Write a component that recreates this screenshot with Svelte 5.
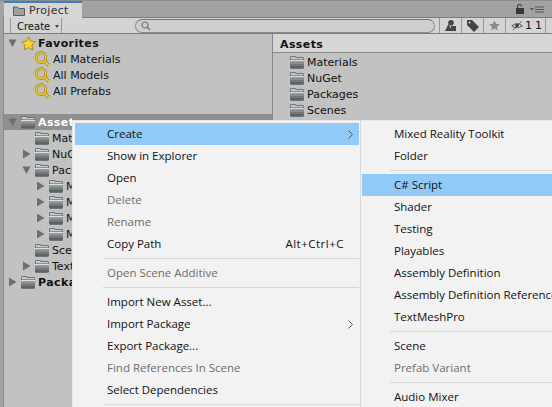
<script>
  const favorites = ['All Materials', 'All Models', 'All Prefabs'];
  const assets = ['Materials', 'NuGet', 'Packages', 'Scenes', 'TextMeshPro'];

  const tree = [
    { name: 'Materials', depth: 1 },
    { name: 'NuGet', depth: 1, arrow: 'closed' },
    { name: 'Packages', depth: 1, arrow: 'open' },
    { name: 'MixedReality', depth: 2, arrow: 'closed' },
    { name: 'Microsoft', depth: 2, arrow: 'closed' },
    { name: 'Models', depth: 2, arrow: 'closed' },
    { name: 'Meshes', depth: 2, arrow: 'closed' },
    { name: 'Scenes', depth: 1 },
    { name: 'TextMeshPro', depth: 1, arrow: 'closed' }
  ];

  const mainMenu = [
    { label: 'Create', active: true, sub: true },
    { label: 'Show in Explorer' },
    { label: 'Open' },
    { label: 'Delete', off: true },
    { label: 'Rename', off: true },
    { label: 'Copy Path', key: 'Alt+Ctrl+C' },
    { sep: true },
    { label: 'Open Scene Additive', off: true },
    { sep: true },
    { label: 'Import New Asset...' },
    { label: 'Import Package', sub: true },
    { label: 'Export Package...' },
    { label: 'Find References In Scene', off: true },
    { label: 'Select Dependencies' },
    { sep: true }
  ];

  const createMenu = [
    { label: 'Mixed Reality Toolkit' },
    { label: 'Folder' },
    { sep: true },
    { label: 'C# Script', active: true },
    { label: 'Shader' },
    { label: 'Testing' },
    { label: 'Playables' },
    { label: 'Assembly Definition' },
    { label: 'Assembly Definition Reference' },
    { label: 'TextMeshPro' },
    { sep: true },
    { label: 'Scene' },
    { label: 'Prefab Variant', off: true },
    { sep: true },
    { label: 'Audio Mixer' }
  ];
</script>

{#snippet folder()}
  <svg class="folder" width="16" height="14" viewBox="0 0 16 14">
    <path d="M1 13 V2 L2 1 H6.5 L7.5 2 H14 L15 3 V13 L14 14 H2 Z" fill="#6e7679" />
    <path d="M2 2 H6 L7 3 H14 V4 H2 Z" fill="#c9c9c9" />
    <rect x="2" y="4" width="12" height="1" fill="#8d8f90" />
    <rect x="1" y="5" width="14" height="1" fill="#dcdcdc" />
    <rect x="1" y="6" width="14" height="1" fill="#9a9fa1" />
    <rect x="1" y="7" width="14" height="2" fill="#878e91" />
    <rect x="1" y="9" width="14" height="2" fill="#70787b" />
    <rect x="1" y="11" width="14" height="2" fill="#5d6468" />
  </svg>
{/snippet}

{#snippet arrow(kind)}
  <svg class="arrow" width="10" height="10" viewBox="0 0 10 10">
    {#if kind === 'open'}
      <path d="M0.5 1.5 H8.5 L4.5 9 Z" fill="#6e6e6e" />
    {:else if kind === 'closed'}
      <path d="M1 0.5 L8.5 5 L1 9.5 Z" fill="#6e6e6e" />
    {/if}
  </svg>
{/snippet}

{#snippet search()}
  <svg class="search" width="17" height="16" viewBox="0 0 17 16">
    <circle cx="7" cy="6.5" r="4.8" fill="none" stroke="#8a7a30" stroke-width="2.8" />
    <circle cx="7" cy="6.5" r="4.8" fill="none" stroke="#f5cf1f" stroke-width="1.6" />
    <path d="M10.5 10 L15 14.5" stroke="#8a7a30" stroke-width="3.2" />
    <path d="M10.5 10 L15 14.5" stroke="#f5cf1f" stroke-width="1.8" />
  </svg>
{/snippet}

{#snippet menu(items)}
  {#each items as item}
    {#if item.sep}
      <div class="sep"></div>
    {:else}
      <div class="item" class:active={item.active} class:off={item.off}>
        <span class="label">{item.label}</span>
        {#if item.key}<span class="key">{item.key}</span>{/if}
        {#if item.sub}
          <svg class="chev" width="5" height="9" viewBox="0 0 5 9"><path d="M0.5 0.5 L4.5 4.5 L0.5 8.5" fill="none" stroke="#555" /></svg>
        {/if}
      </div>
    {/if}
  {/each}
{/snippet}

<div class="window">
  <div class="tabs">
    <div class="tab">
      <svg width="12" height="10" viewBox="0 0 12 10"><path d="M0.5 9.5 V1 H4.5 L6 2.5 H11.5 V9.5 Z" fill="#a0a0a0" stroke="#5c5c5c" /></svg>
      <span>Project</span>
    </div>
    <div class="tab-tools">
      <svg width="9" height="10" viewBox="0 0 9 10"><path d="M1.5 4.5 V2.5 A2 2 0 0 1 5.5 2.5" fill="none" stroke="#3c3c3c" stroke-width="1.2" /><rect x="0" y="4" width="8" height="6" fill="#383838" /></svg>
      <svg width="14" height="7" viewBox="0 0 14 7"><path d="M0 2 H4 L2 4.5 Z" fill="#555" /><path d="M5 1 H14 M5 3.5 H14 M5 6 H14" stroke="#555" stroke-width="1.2" /></svg>
    </div>
  </div>

  <div class="toolbar">
    <div class="create">Create <i></i></div>
    <div class="search-box">
      <svg width="12" height="12" viewBox="0 0 12 12"><circle cx="5" cy="5" r="3" fill="none" stroke="#777" stroke-width="1.2" /><path d="M7 7 L10 10" stroke="#777" stroke-width="1.4" /></svg>
    </div>
    <div class="tool">
      <svg width="11" height="11" viewBox="0 0 11 11"><path d="M3.5 4 L7 11 H0 Z" fill="#444" /><circle cx="6" cy="2.8" r="2.8" fill="#444" /><rect x="6" y="6" width="5" height="5" fill="#444" /></svg>
    </div>
    <div class="tool">
      <svg width="12" height="12" viewBox="0 0 12 12"><path d="M0 0 H5 L12 7 L7 12 L0 5 Z" fill="#444" /><circle cx="2.5" cy="2.5" r="1" fill="#d2d2d2" /></svg>
    </div>
    <div class="tool">
      <svg width="11" height="11" viewBox="0 0 13 12"><path d="M6.5 0 L8.3 4 L13 4.5 L9.4 7.4 L10.5 12 L6.5 9.6 L2.5 12 L3.6 7.4 L0 4.5 L4.7 4 Z" fill="#8a8a8a" /></svg>
    </div>
    <div class="tool eye">
      <svg width="16" height="13" viewBox="0 0 16 13"><path d="M1 7 Q8 1 15 7 Q8 12 1 7 Z" fill="none" stroke="#444" stroke-width="1.1" /><circle cx="8" cy="6.5" r="2.4" fill="#444" /><path d="M2.5 12.5 L14 1" stroke="#444" stroke-width="1.2" /></svg>
      <span>11</span>
    </div>
  </div>

  <div class="panes">
    <div class="left">
      <div class="row head fav">
        {@render arrow('open')}
        <svg class="star" width="15" height="15" viewBox="0 0 15 15"><path d="M7.5 0.8 L9.6 5.2 L14.4 5.8 L10.9 9.1 L11.8 14 L7.5 11.6 L3.2 14 L4.1 9.1 L0.6 5.8 L5.4 5.2 Z" fill="#fbd335" stroke="#a98a1a" stroke-linejoin="round" /></svg>
        <b>Favorites</b>
      </div>
      {#each favorites as fav}
        <div class="row fav-item">{@render search()}<span>{fav}</span></div>
      {/each}

      <div class="gap"></div>

      <div class="row head selected">
        {@render arrow('open')}
        {@render folder()}
        <b>Assets</b>
      </div>
      {#each tree as node}
        <div class="row" class:d2={node.depth === 2} class:d1={node.depth === 1}>
          {@render arrow(node.arrow)}
          {@render folder()}
          <span>{node.name}</span>
        </div>
      {/each}
      <div class="row head">
        {@render arrow('closed')}
        {@render folder()}
        <b>Packages</b>
      </div>
    </div>

    <div class="right">
      <div class="crumb">Assets</div>
      <div class="list">
        {#each assets as name}
          <div class="row file">{@render folder()}<span>{name}</span></div>
        {/each}
      </div>
    </div>
  </div>

  <div class="menu main-menu">
    {@render menu(mainMenu)}
  </div>
  <div class="menu sub-menu">
    {@render menu(createMenu)}
  </div>
</div>

<style>
  :global(body) {
    margin: 0;
    overflow: hidden;
  }
  .window {
    position: relative;
    width: 552px;
    height: 407px;
    overflow: hidden;
    background: #a2a2a2;
    font-family: "DejaVu Sans", sans-serif;
    font-size: 11px;
    color: #111;
    display: flex;
    flex-direction: column;
    border-top: 1px solid #8c8c8c;
    box-sizing: border-box;
  }
  .tabs {
    height: 16px;
    display: flex;
    justify-content: space-between;
    padding-left: 4px;
    flex: none;
  }
  .tab {
    width: 78px;
    height: 17px;
    position: relative;
    z-index: 1;
    box-sizing: border-box;
    background: #d6d6d6;
    border-top: 2px solid #3c7fc9;
    display: flex;
    align-items: center;
    gap: 4px;
    padding-left: 9px;
    color: #333;
    letter-spacing: 0.3px;
  }
  .tab-tools {
    display: flex;
    align-items: center;
    gap: 5px;
    padding-right: 8px;
  }
  .toolbar {
    height: 17px;
    box-sizing: border-box;
    flex: none;
    margin-left: 3px;
    background: #d4d4d4;
    border-top: 1px solid #7c7c7c;
    border-bottom: 1px solid #7c7c7c;
    border-left: 1px solid #8a8a8a;
    display: flex;
    align-items: center;
    padding-left: 6px;
  }
  .create {
    width: 52px;
    box-sizing: border-box;
    height: 15px;
    flex: none;
    display: flex;
    align-items: center;
    gap: 5px;
    padding: 2px 0 0 6px;
    border-left: 1px solid #999;
    border-right: 1px solid #999;
    font-size: 10px;
  }
  .create i {
    border: 2.5px solid transparent;
    border-top: 3px solid #444;
    margin-bottom: -2px;
  }
  .search-box {
    width: 300px;
    height: 14px;
    flex: none;
    margin-left: 73px;
    margin-right: 4px;
    border: 1px solid #8a8a8a;
    border-top-color: #777;
    border-radius: 7px;
    background: #cfcfcf;
    display: flex;
    align-items: center;
    padding-left: 4px;
    box-sizing: border-box;
  }
  .tool {
    width: 22px;
    height: 15px;
    box-sizing: border-box;
    border-left: 1px solid #999;
    display: flex;
    align-items: center;
    justify-content: center;
    flex: none;
  }
  .eye {
    width: 41px;
    gap: 2px;
    justify-content: flex-start;
    padding-left: 5px;
    border-right: 1px solid #999;
    letter-spacing: 3px;
  }
  .panes {
    flex: 1;
    display: grid;
    grid-template-columns: 269px 1fr;
    margin-left: 3px;
    border-left: 1px solid #8a8a8a;
    background: #c2c2c2;
    min-height: 0;
  }
  .left {
    padding-top: 1px;
    border-right: 1px solid #8a8a8a;
  }
  .row {
    height: 16px;
    display: flex;
    align-items: center;
    white-space: nowrap;
  }
  .row b {
    letter-spacing: 0.4px;
  }
  .arrow {
    flex: none;
    margin-left: 4px;
    margin-right: 2px;
  }
  .folder {
    flex: none;
    margin-right: 2px;
  }
  .star {
    flex: none;
    margin-right: 2px;
    margin-left: 1px;
  }
  .fav-item {
    padding-left: 30px;
  }
  .search {
    flex: none;
    margin-right: 2px;
  }
  .gap {
    height: 15px;
  }
  .selected {
    background: #8f8f8f;
    color: #fff;
  }
  .d1 {
    padding-left: 14px;
  }
  .d2 {
    padding-left: 28px;
  }
  .crumb {
    height: 19px;
    box-sizing: border-box;
    background: #d6d6d6;
    border-bottom: 1px solid #8a8a8a;
    font-weight: bold;
    letter-spacing: 0.4px;
    padding: 2px 0 0 7px;
    display: flex;
    align-items: center;
  }
  .list {
    padding-top: 1px;
  }
  .file {
    padding-left: 16px;
  }
  .menu {
    position: absolute;
    box-sizing: border-box;
    background: #f2f2f2;
    border: 1px solid #e6e6e6;
    font-family: "Open Sans", sans-serif;
    font-size: 11.5px;
    color: #111;
    padding: 2px 1px 1px;
    height: 300px;
  }
  .main-menu {
    left: 72px;
    top: 119px;
    width: 289px;
    padding-left: 2px;
  }
  .sub-menu {
    left: 360px;
    top: 119px;
    width: 200px;
    border-left-color: #d8d8d8;
  }
  .item {
    height: 22px;
    box-sizing: border-box;
    padding: 0 0 2px 32px;
    display: flex;
    align-items: center;
    position: relative;
    white-space: nowrap;
  }
  .item.active {
    background: #91c9f7;
  }
  .item.off {
    color: #6d6d6d;
  }
  .key {
    position: absolute;
    right: 15px;
    letter-spacing: 0.5px;
  }
  .chev {
    position: absolute;
    right: 6px;
    top: 7px;
  }
  .sep {
    height: 1px;
    margin: 3px 0 3px 28px;
    background: #d7d7d7;
  }
</style>
